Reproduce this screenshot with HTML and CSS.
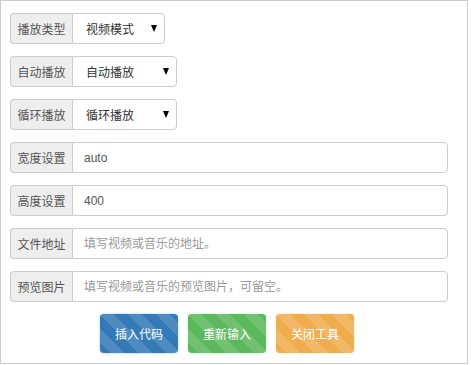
FILE: index.html
```html
<!DOCTYPE html>
<html lang="zh-CN">
<head>
    <meta charset="UTF-8">
    <title>插入视频</title>
    <link rel="stylesheet" href="styles.css">
</head>
<body>
    <div class="panel">
        <div class="row">
            <span class="addon">播放类型</span>
            <div class="select w1"><span>视频模式</span><i class="arrow"></i></div>
        </div>
        <div class="row">
            <span class="addon">自动播放</span>
            <div class="select w2"><span>自动播放</span><i class="arrow"></i></div>
        </div>
        <div class="row">
            <span class="addon">循环播放</span>
            <div class="select w2"><span>循环播放</span><i class="arrow"></i></div>
        </div>
        <div class="row full">
            <span class="addon">宽度设置</span>
            <input class="field" type="text" value="auto">
        </div>
        <div class="row full">
            <span class="addon">高度设置</span>
            <input class="field" type="text" value="400">
        </div>
        <div class="row full">
            <span class="addon">文件地址</span>
            <input class="field" type="text" placeholder="填写视频或音乐的地址。">
        </div>
        <div class="row full">
            <span class="addon">预览图片</span>
            <input class="field" type="text" placeholder="填写视频或音乐的预览图片，可留空。">
        </div>

        <div class="btns">
            <button class="btn blue">插入代码</button>
            <button class="btn green">重新输入</button>
            <button class="btn orange">关闭工具</button>
        </div>
    </div>
</body>
</html>
```

FILE: styles.css
```css
body{
    margin:0;
    font-family:"Liberation Sans","Noto Sans CJK SC",sans-serif;
    font-size:12px;
    color:#555;
}

.panel{
    width:457px;
    height:350px;
    border:1px solid #ccc;
    padding:12px 0 0 9px;
}

.row{
    display:flex;
    height:31px;
    margin-bottom:12px;
}

.row.full{
    width:438px;
}

.addon{
    box-sizing:border-box;
    background:#eee;
    border:1px solid #ccc;
    border-right:0;
    border-radius:4px 0 0 4px;
    display:flex;
    align-items:center;
    justify-content:center;
    flex:none;
    width:62px;
}

.select{
    border:1px solid #ccc;
    border-radius:0 4px 4px 0;
    box-sizing:border-box;
    display:flex;
    align-items:center;
    justify-content:space-between;
    padding:0 7px 0 13px;
    color:#333;
}

.w1{ width:93px; }
.w2{ width:105px; }

.arrow{
    width:0;
    height:0;
    border-left:3.5px solid transparent;
    border-right:3.5px solid transparent;
    border-top:7px solid #000;
}

.field{
    flex:1;
    border:1px solid #ccc;
    border-radius:0 4px 4px 0;
    padding:0 11px;
    font:inherit;
    color:#555;
    outline:none;
}

.field::placeholder{
    color:#999;
}

.btns{
    width:434px;
    display:flex;
    justify-content:center;
    gap:10px;
    margin-top:3px;
}

.btn{
    width:78px;
    height:39px;
    border:0;
    border-radius:4px;
    color:#fff;
    font:inherit;
    font-size:12px;
    background-image:linear-gradient(45deg,rgba(255,255,255,.13) 25%,transparent 25%,transparent 50%,rgba(255,255,255,.13) 50%,rgba(255,255,255,.13) 75%,transparent 75%,transparent);
    background-size:28px 28px;
}

.blue{
    background-color:#337ab7;
    box-shadow:0 0 3px #9cd2f5;
}

.green{
    background-color:#5cb85c;
    box-shadow:0 0 3px #b6f0b6;
}

.orange{
    background-color:#f0ad4e;
    box-shadow:0 0 3px #fbe2b8;
}
```
